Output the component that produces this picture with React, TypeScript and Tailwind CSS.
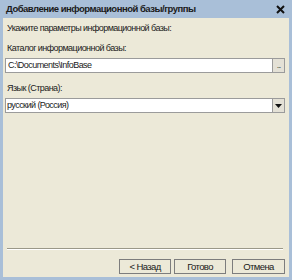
import React from "react";

export default function App() {
  const font = { fontFamily: '"Liberation Sans", Arial, sans-serif' };
  return (
    <div
      className="w-[292px] h-[280px] bg-[#a9bfd8] flex flex-col px-[3px] pb-[3px] text-[9px] tracking-[-0.55px] text-[#1a1a1a]"
      style={font}
    >
      <div className="h-[18px] flex items-center justify-between pl-[3px] pr-[3px] shrink-0">
        <span className="font-bold text-[9.5px] text-[#1b1b1b] tracking-[-0.5px]">
          Добавление информационной базы/группы
        </span>
        <svg width="9" height="9" viewBox="0 0 9 9" className="mr-[1px]">
          <path d="M1 1 L8 8 M8 1 L1 8" stroke="#111" strokeWidth="2" />
        </svg>
      </div>
      <div className="flex-1 bg-[#ece9d8] flex flex-col pl-[2px] pr-[4px]">
        <div className="mt-[4px] pl-[2px] h-[13px] leading-[13px]">Укажите параметры информационной базы:</div>
        <div className="mt-[7px] pl-[2px] h-[13px] leading-[13px]">Каталог информационной базы:</div>
        <div className="mt-[3px] h-[15px] flex border border-[#9b9b9b] bg-white">
          <div className="flex-1 pl-[2px] leading-[13px]">C:\Documents\InfoBase</div>
          <div className="w-[12px] bg-[#e4e1d6] border-l border-[#9b9b9b] flex items-end justify-center pb-[3px]">
            <span className="text-[8px] leading-[6px] tracking-[-1px] text-[#333]">...</span>
          </div>
        </div>
        <div className="mt-[9px] pl-[2px] h-[13px] leading-[13px]">Язык (Страна):</div>
        <div className="mt-[3px] h-[15px] flex border border-[#9b9b9b] bg-white">
          <div className="flex-1 pl-[1px] leading-[13px]">русский (Россия)</div>
          <div className="w-[12px] bg-[#e4e1d6] border-l border-[#9b9b9b] flex items-center justify-center">
            <svg width="7" height="4" viewBox="0 0 7 4">
              <path d="M0 0 H7 L3.5 4 Z" fill="#111" />
            </svg>
          </div>
        </div>
        <div className="flex-1" />
        <div className="mx-[2px] h-[2px] border-t border-[#9a9888] border-b border-b-white" />
        <div className="flex justify-end gap-[3px] mt-[9px] mb-[3px]">
          <button className="w-[52px] h-[15px] border border-[#7d7d7d] bg-[#ece9d8] text-[9.5px] tracking-[-0.6px] leading-[13px]" style={font}>&lt; Назад</button>
          <button className="w-[52px] h-[15px] border border-[#7d7d7d] bg-[#ece9d8] text-[9.5px] tracking-[-0.6px] leading-[13px] mr-[3px]" style={font}>Готово</button>
          <button className="w-[53px] h-[15px] border border-[#7d7d7d] bg-[#ece9d8] text-[9.5px] tracking-[-0.6px] leading-[13px]" style={font}>Отмена</button>
        </div>
      </div>
    </div>
  );
}
